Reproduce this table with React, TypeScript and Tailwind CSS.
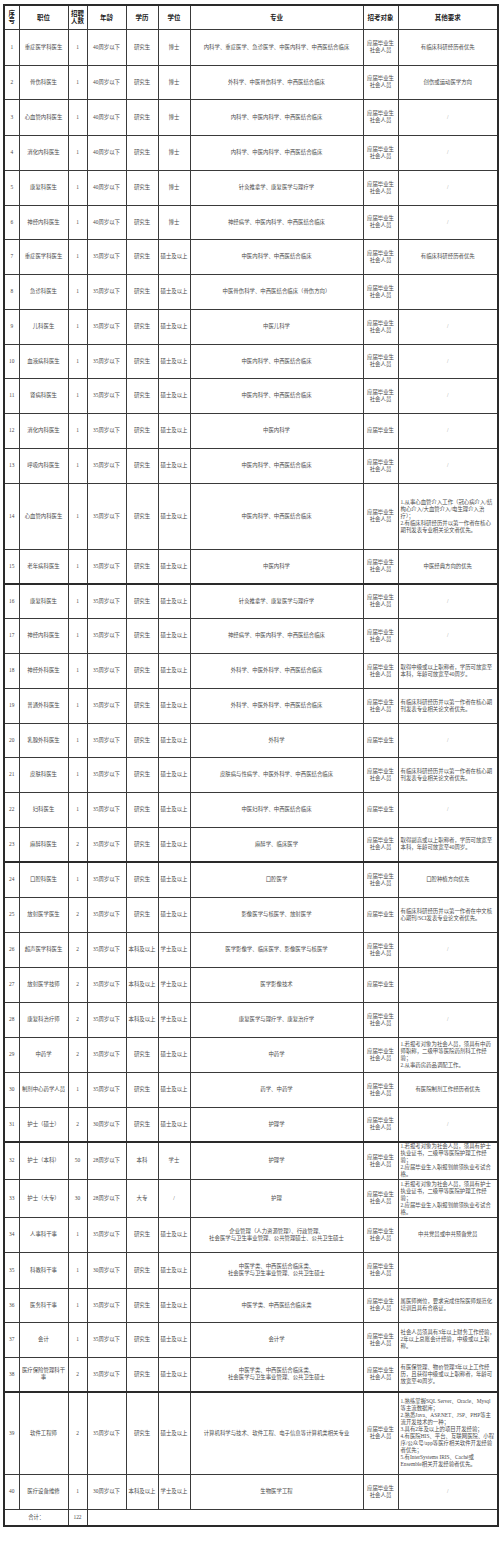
import React from "react";

type Row = {
  no: number;
  pos: string;
  num: string;
  age: string;
  edu: string;
  deg: string;
  major: string;
  target: "b" | "y";
  other: string;
  h?: number;
  thick?: boolean;
};

const A35 = "35周岁以下";
const A40 = "40周岁以下";
const YJS = "研究生";
const SS = "硕士及以上";
const NURSE =
  "1.若报考对象为社会人员，须具有护士执业证书，二级甲等医院护理工作经验；\n2.应届毕业生入职报到前须执业考试合格。";
const PAPER = "有临床科研经历并以第一作者在核心期刊发表专业相关论文者优先。";

const ROWS: Row[] = [
  { no: 1, pos: "重症医学科医生", num: "1", age: A40, edu: YJS, deg: "博士", major: "内科学、重症医学、急诊医学、中医内科学、中西医结合临床", target: "b", other: "有临床科研经历者优先", h: 36 },
  { no: 2, pos: "骨伤科医生", num: "1", age: A40, edu: YJS, deg: "博士", major: "外科学、中医骨伤科学、中西医结合临床", target: "b", other: "创伤或运动医学方向", h: 34 },
  { no: 3, pos: "心血管内科医生", num: "1", age: A40, edu: YJS, deg: "博士", major: "内科学、中医内科学、中西医结合临床", target: "b", other: "/", h: 36 },
  { no: 4, pos: "消化内科医生", num: "1", age: A40, edu: YJS, deg: "博士", major: "内科学、中医内科学、中西医结合临床", target: "b", other: "/" },
  { no: 5, pos: "康复科医生", num: "1", age: A40, edu: YJS, deg: "博士", major: "针灸推拿学、康复医学与理疗学", target: "b", other: "/" },
  { no: 6, pos: "神经内科医生", num: "1", age: A40, edu: YJS, deg: "博士", major: "神经病学、中医内科学、中西医结合临床", target: "b", other: "/", h: 34 },
  { no: 7, pos: "重症医学科医生", num: "1", age: A35, edu: YJS, deg: SS, major: "中医内科学、中西医结合临床", target: "b", other: "有临床科研经历者优先" },
  { no: 8, pos: "急诊科医生", num: "1", age: A35, edu: YJS, deg: SS, major: "中医骨伤科学、中西医结合临床（骨伤方向）", target: "b", other: "" },
  { no: 9, pos: "儿科医生", num: "1", age: A35, edu: YJS, deg: SS, major: "中医儿科学", target: "b", other: "/" },
  { no: 10, pos: "血液病科医生", num: "1", age: A35, edu: YJS, deg: SS, major: "中医内科学、中西医结合临床", target: "b", other: "/", h: 34 },
  { no: 11, pos: "肾病科医生", num: "1", age: A35, edu: YJS, deg: SS, major: "中医内科学、中西医结合临床", target: "b", other: "/" },
  { no: 12, pos: "消化内科医生", num: "1", age: A35, edu: YJS, deg: SS, major: "中医内科学", target: "y", other: "/" },
  { no: 13, pos: "呼吸内科医生", num: "1", age: A35, edu: YJS, deg: SS, major: "中医内科学、中西医结合临床", target: "b", other: "/" },
  { no: 14, pos: "心血管内科医生", num: "1", age: A35, edu: YJS, deg: SS, major: "中医内科学、中西医结合临床", target: "b", other: "1.从事心血管介入工作（冠心病介入/结构心介入/大血管介入/电生理介入治疗）；\n2.有临床科研经历并以第一作者在核心期刊发表专业相关论文者优先。", h: 66 },
  { no: 15, pos: "老年病科医生", num: "1", age: A35, edu: YJS, deg: SS, major: "中医内科学", target: "b", other: "中医经典方向的优先" },
  { no: 16, pos: "康复科医生", num: "1", age: A35, edu: YJS, deg: SS, major: "针灸推拿学、康复医学与理疗学", target: "b", other: "/", h: 34, thick: true },
  { no: 17, pos: "神经内科医生", num: "1", age: A35, edu: YJS, deg: SS, major: "神经病学、中医内科学、中西医结合临床", target: "b", other: "/" },
  { no: 18, pos: "神经外科医生", num: "1", age: A35, edu: YJS, deg: SS, major: "外科学、中医外科学、中西医结合临床", target: "b", other: "取得中级或以上职称者，学历可放宽至本科，年龄可放宽至40周岁。" },
  { no: 19, pos: "普通外科医生", num: "1", age: A35, edu: YJS, deg: SS, major: "外科学、中医外科学、中西医结合临床", target: "b", other: PAPER },
  { no: 20, pos: "乳腺外科医生", num: "1", age: A35, edu: YJS, deg: SS, major: "外科学", target: "y", other: "/", h: 34 },
  { no: 21, pos: "皮肤科医生", num: "1", age: A35, edu: YJS, deg: SS, major: "皮肤病与性病学、中医外科学、中西医结合临床", target: "b", other: PAPER },
  { no: 22, pos: "妇科医生", num: "1", age: A35, edu: YJS, deg: SS, major: "中医妇科学、中西医结合临床", target: "y", other: "/" },
  { no: 23, pos: "麻醉科医生", num: "2", age: A35, edu: YJS, deg: SS, major: "麻醉学、临床医学", target: "b", other: "取得副高或以上职称者，学历可放宽至本科，年龄可放宽至40周岁。" },
  { no: 24, pos: "口腔科医生", num: "1", age: A35, edu: YJS, deg: SS, major: "口腔医学", target: "b", other: "口腔种植方向优先", thick: true },
  { no: 25, pos: "放射医学医生", num: "2", age: A35, edu: YJS, deg: SS, major: "影像医学与核医学、放射医学", target: "y", other: "有临床科研经历并以第一作者在中文核心期刊/SCI发表专业论文者优先。" },
  { no: 26, pos: "超声医学科医生", num: "2", age: A35, edu: "本科及以上", deg: "学士及以上", major: "医学影像学、临床医学、影像医学与核医学", target: "b", other: "/" },
  { no: 27, pos: "放射医学技师", num: "2", age: A35, edu: "本科及以上", deg: "学士及以上", major: "医学影像技术", target: "y", other: "" },
  { no: 28, pos: "康复科治疗师", num: "2", age: A35, edu: "本科及以上", deg: "学士及以上", major: "康复医学与理疗学、康复治疗学", target: "b", other: "/" },
  { no: 29, pos: "中药学", num: "2", age: A35, edu: YJS, deg: SS, major: "中药学", target: "b", other: "1.若报考对象为社会人员，须具有中药师职称，二级甲等医院药剂科工作经验；\n2.从事药房药品调配工作。" },
  { no: 30, pos: "制剂中心药学人员", num: "1", age: A35, edu: YJS, deg: SS, major: "药学、中药学", target: "b", other: "有医院制剂工作经历者优先" },
  { no: 31, pos: "护士（硕士）", num: "2", age: "30周岁以下", edu: YJS, deg: SS, major: "护理学", target: "b", other: "/" },
  { no: 32, pos: "护士（本科）", num: "50", age: "28周岁以下", edu: "本科", deg: "学士", major: "护理学", target: "b", other: NURSE, h: 37, thick: true },
  { no: 33, pos: "护士（大专）", num: "30", age: "28周岁以下", edu: "大专", deg: "/", major: "护理", target: "b", other: NURSE, h: 38 },
  { no: 34, pos: "人事科干事", num: "1", age: A35, edu: YJS, deg: SS, major: "企业管理（人力资源管理）、行政管理、\n社会医学与卫生事业管理、公共管理硕士、公共卫生硕士", target: "b", other: "中共党员或中共预备党员" },
  { no: 35, pos: "科教科干事", num: "1", age: "30周岁以下", edu: YJS, deg: SS, major: "中医学类、中西医结合临床类、\n社会医学与卫生事业管理、公共卫生硕士", target: "b", other: "", h: 36 },
  { no: 36, pos: "医务科干事", num: "1", age: A35, edu: YJS, deg: SS, major: "中医学类、中西医结合临床类", target: "b", other: "属医师岗位，要求完成住院医师规范化培训且具有合格证。", h: 34 },
  { no: 37, pos: "会计", num: "1", age: A35, edu: YJS, deg: SS, major: "会计学", target: "b", other: "社会人员须具有3年以上财务工作经验，2年以上总账会计经验，中级或以上职称。" },
  { no: 38, pos: "医疗保险管理科干事", num: "2", age: A35, edu: YJS, deg: SS, major: "中医学类、中西医结合临床类、\n社会医学与卫生事业管理、公共卫生硕士", target: "b", other: "有医保管理、物价管理3年以上工作经历，且获得中级或以上职称者，年龄可放宽至40周岁。" },
  { no: 39, pos: "软件工程师", num: "2", age: A35, edu: YJS, deg: SS, major: "计算机科学与技术、软件工程、电子信息等计算机类相关专业", target: "b", other: "1.熟练掌握SQL Server、Oracle、Mysql等主流数据库；\n2.熟悉Java、ASP.NET、JSP、PHP等主流开发技术的一种；\n3.具有2年及以上的项目开发经验；\n4.有医院HIS、平台、互联网医院、小程序/公众号/app等医疗相关软件开发经验者优先；\n5.有InterSystems IRIS、Caché或Ensemble相关开发经验者优先。", h: 82, thick: true },
  { no: 40, pos: "医疗设备维修", num: "1", age: "30周岁以下", edu: "本科及以上", deg: "学士及以上", major: "生物医学工程", target: "b", other: "/" },
];

// heights looked up from a fixed list so every class is written out
const HEIGHT: Record<number, string> = {
  34: "h-[34px]",
  35: "h-[35px]",
  36: "h-[36px]",
  37: "h-[37px]",
  38: "h-[38px]",
  66: "h-[66px]",
  82: "h-[82px]",
};

const HEAD = ["序号", "职位", "招聘人数", "年龄", "学历", "学位", "专业", "招考对象", "其他要求"];

const cell = "border border-[#3a3a3a] text-center align-middle p-0";

export default function App() {
  return (
    <div
      className="min-h-[1544px] w-[500px] bg-white pt-[4px] pl-[3px]"
      style={{ fontFamily: '"Liberation Serif", "Noto Sans CJK SC", serif' }}
    >
      <table className="w-[494px] table-fixed border-collapse border-2 border-[#2a2a2a] text-[5.4px] leading-[7px] text-[#4a4a4a]">
        <colgroup>
          <col className="w-[15px]" />
          <col className="w-[49px]" />
          <col className="w-[19px]" />
          <col className="w-[39px]" />
          <col className="w-[32px]" />
          <col className="w-[32px]" />
          <col className="w-[173px]" />
          <col className="w-[35px]" />
          <col className="w-[100px]" />
        </colgroup>
        <thead>
          <tr className="h-[24px]">
            {HEAD.map((h) => (
              <th
                key={h}
                className={`${cell} px-[1px] text-[6.5px] leading-[7.5px] font-bold text-[#1a1a1a]`}
              >
                {h}
              </th>
            ))}
          </tr>
        </thead>
        <tbody>
          {ROWS.map((r) => {
            const c = r.thick ? `${cell} border-t-2 border-t-[#2a2a2a]` : cell;
            const long = r.other.length > 18;
            return (
              <tr key={r.no} className={HEIGHT[r.h ?? 35]}>
                <td className={c}>{r.no}</td>
                <td className={c}>{r.pos}</td>
                <td className={c}>{r.num}</td>
                <td className={c}>{r.age}</td>
                <td className={c}>{r.edu}</td>
                <td className={c}>{r.deg}</td>
                <td className={`${c} whitespace-pre-line`}>{r.major}</td>
                <td className={c}>
                  {r.target === "b" ? (
                    <>
                      应届毕业生
                      <br />
                      社会人员
                    </>
                  ) : (
                    "应届毕业生"
                  )}
                </td>
                <td
                  className={`${c} whitespace-pre-line px-[2px] ${
                    long ? "text-left" : "text-center"
                  } ${r.other === "/" ? "text-[#999]" : ""}`}
                >
                  {r.other}
                </td>
              </tr>
            );
          })}
          <tr className="h-[17px]">
            <td colSpan={2} className={cell}>
              合计：
            </td>
            <td className={cell}>122</td>
            <td colSpan={6} className={cell}></td>
          </tr>
        </tbody>
      </table>
    </div>
  );
}
